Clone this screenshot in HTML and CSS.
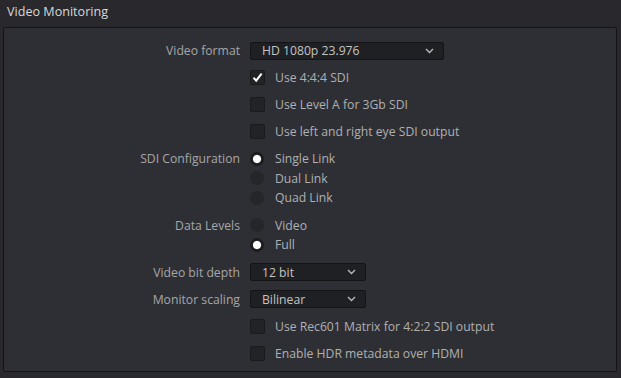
FILE: index.html
```html
<!DOCTYPE html>
<html lang="en">
<head>
    <meta charset="UTF-8">
    <title>Video Monitoring</title>
    <link rel="stylesheet" href="styles.css">
</head>
<body>
    <div class="section-title">Video Monitoring</div>

    <div class="panel">
        <div class="row">
            <div class="label">Video format</div>
            <div class="control">
                <div class="select wide">
                    <span>HD 1080p 23.976</span>
                    <svg class="chevron" width="9" height="6" viewBox="0 0 9 6"><path d="M1 1 L4.5 4.5 L8 1" fill="none" stroke="#b8b8b8" stroke-width="1.4"/></svg>
                </div>
            </div>
        </div>

        <div class="row">
            <div class="label"></div>
            <div class="control">
                <span class="checkbox checked">
                    <svg width="13" height="13" viewBox="0 0 13 13"><path d="M2.5 6.8 L5.2 9.6 L10.6 2.6" fill="none" stroke="#fff" stroke-width="2"/></svg>
                </span>
                <span class="option-text">Use 4:4:4 SDI</span>
            </div>
        </div>

        <div class="row">
            <div class="label"></div>
            <div class="control">
                <span class="checkbox"></span>
                <span class="option-text">Use Level A for 3Gb SDI</span>
            </div>
        </div>

        <div class="row">
            <div class="label"></div>
            <div class="control">
                <span class="checkbox"></span>
                <span class="option-text">Use left and right eye SDI output</span>
            </div>
        </div>

        <div class="group">
            <div class="label">SDI Configuration</div>
            <div class="options">
                <div class="option"><span class="radio selected"></span><span class="option-text">Single Link</span></div>
                <div class="option"><span class="radio"></span><span class="option-text">Dual Link</span></div>
                <div class="option"><span class="radio"></span><span class="option-text">Quad Link</span></div>
            </div>
        </div>

        <div class="group">
            <div class="label">Data Levels</div>
            <div class="options">
                <div class="option"><span class="radio"></span><span class="option-text">Video</span></div>
                <div class="option"><span class="radio selected"></span><span class="option-text">Full</span></div>
            </div>
        </div>

        <div class="row">
            <div class="label">Video bit depth</div>
            <div class="control">
                <div class="select narrow">
                    <span>12 bit</span>
                    <svg class="chevron" width="9" height="6" viewBox="0 0 9 6"><path d="M1 1 L4.5 4.5 L8 1" fill="none" stroke="#b8b8b8" stroke-width="1.4"/></svg>
                </div>
            </div>
        </div>

        <div class="row">
            <div class="label">Monitor scaling</div>
            <div class="control">
                <div class="select narrow">
                    <span>Bilinear</span>
                    <svg class="chevron" width="9" height="6" viewBox="0 0 9 6"><path d="M1 1 L4.5 4.5 L8 1" fill="none" stroke="#b8b8b8" stroke-width="1.4"/></svg>
                </div>
            </div>
        </div>

        <div class="row">
            <div class="label"></div>
            <div class="control">
                <span class="checkbox"></span>
                <span class="option-text">Use Rec601 Matrix for 4:2:2 SDI output</span>
            </div>
        </div>

        <div class="row">
            <div class="label"></div>
            <div class="control">
                <span class="checkbox"></span>
                <span class="option-text">Enable HDR metadata over HDMI</span>
            </div>
        </div>
    </div>
</body>
</html>
```

FILE: styles.css
```css
body {
    margin: 0;
    padding: 0;
    background-color: #28282d;
    font-family: "Open Sans", "Noto Sans", sans-serif;
    width: 621px;
    height: 378px;
    overflow: hidden;
}

.section-title {
    height: 27px;
    line-height: 24px;
    padding-left: 7px;
    font-size: 12.6px;
    color: #d8d8d8;
}

.panel {
    margin: 0 4px 0 3px;
    height: 345px;
    box-sizing: border-box;
    border: 1px solid #141416;
    border-radius: 2px;
    background-color: #2e2f34; /* slightly lighter than page */
    padding-top: 9px;
}

.row {
    display: flex;
    align-items: center;
    height: 27px;
}

.label {
    width: 236px;
    flex: none;
    text-align: right;
    font-size: 12.2px;
    color: #a6a6a8;
    margin-right: 10px;
}

.control {
    display: flex;
    align-items: center;
}

/* Dropdowns */
.select {
    display: flex;
    align-items: center;
    justify-content: space-between;
    height: 18px;
    box-sizing: border-box;
    border: 1px solid #141416;
    border-radius: 2px;
    background-color: #1f2023;
    padding: 0 9px 0 11px;
    font-size: 12.2px;
    color: #c4c4c4;
}

.select.wide {
    width: 194px;
}

.select.narrow {
    width: 116px;
}

.chevron {
    display: block;
}

/* Checkboxes */
.checkbox {
    width: 15px;
    height: 15px;
    box-sizing: border-box;
    border: 1px solid #1a1a1c;
    border-radius: 2px;
    background-color: #222326;
    display: flex;
    align-items: center;
    justify-content: center;
    margin-right: 10px;
}

.option-text {
    font-size: 12.2px;
    color: #b0b0b2;
}

/* Radio groups */
.group {
    display: flex;
    align-items: flex-start;
    padding: 4px 0;
}

.group .label {
    line-height: 19.5px;
}

.option {
    display: flex;
    align-items: center;
    height: 19.5px;
}

.radio {
    width: 14px;
    height: 14px;
    border-radius: 50%;
    background-color: #25262a;
    margin-right: 11px;
}

.radio.selected {
    background: radial-gradient(circle, #ffffff 0, #ffffff 3.6px, #1c1c1f 4.6px);
}
```
